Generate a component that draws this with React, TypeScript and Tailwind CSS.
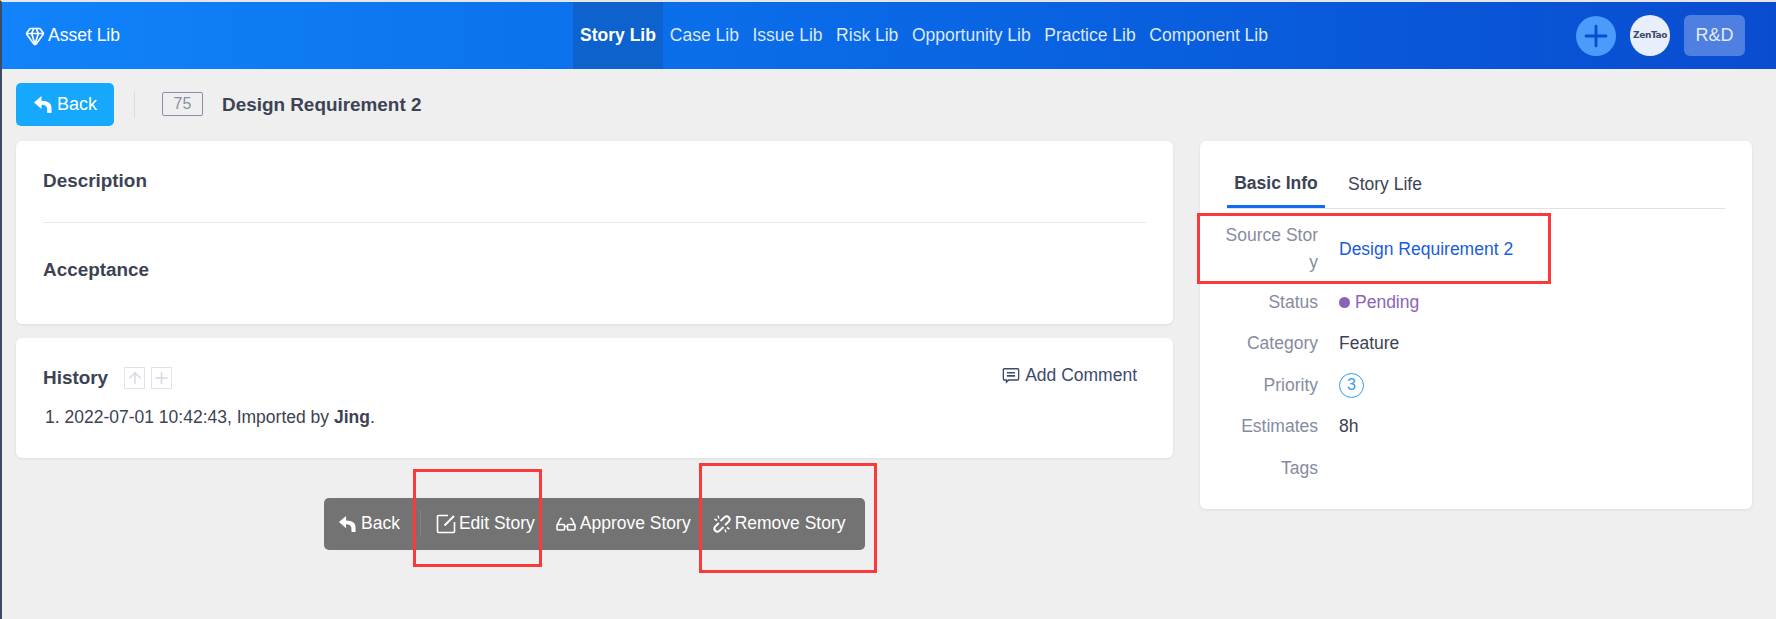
import React from 'react';
import { Gem, Plus, ArrowUp } from 'lucide-react';

type IconProps = { className?: string };

const ReplyIcon: React.FC<IconProps> = ({ className }) => (
    <svg viewBox="0 0 20 20" className={className} fill="currentColor">
        <path d="M8.5 2 1 8.500 8.500 15v-4.200c3 0 5 .7 5.500 3.500l.3 4.700h4.200v-5c0-5-3.500-7-10-7.200z" />
    </svg>
);

const EditIcon: React.FC<IconProps> = ({ className }) => (
    <svg viewBox="0 0 20 20" className={className} fill="none" stroke="currentColor" strokeWidth="1.600">
        <path d="M12 1.500H2.500a1 1 0 0 0-1 1v15a1 1 0 0 0 1 1h15a1 1 0 0 0 1-1V8" />
        <path d="M8.500 11.500 18 2" strokeWidth="2" />
    </svg>
);

const GlassesIcon: React.FC<IconProps> = ({ className }) => (
    <svg viewBox="0 0 20 20" className={className} fill="none" stroke="currentColor" strokeWidth="1.600">
        <rect x="1" y="10.500" width="7.500" height="5.500" rx="1" />
        <rect x="11.500" y="10.500" width="7.500" height="5.500" rx="1" />
        <path d="M8.500 12.500h3M1.200 11 4.500 4.500H6M18.800 11 15.500 4.500H14" />
    </svg>
);

const UnlinkIcon: React.FC<IconProps> = ({ className }) => (
    <svg viewBox="0 0 20 20" className={className} fill="none" stroke="currentColor" strokeWidth="2">
        <path d="M8.500 7 12.800 3a3 3 0 0 1 4.200 4.200l-3.800 3.800" />
        <path d="M11.500 13 7.200 17A3 3 0 0 1 3 12.800L6.800 9" />
        <path d="M2.500 5l2.500 1.500M6 1.800l1 2.700M17.500 15 15 13.500M14 18.200l-1-2.700" strokeWidth="1.500" />
    </svg>
);

const CommentIcon: React.FC<IconProps> = ({ className }) => (
    <svg viewBox="0 0 20 20" className={className} fill="none" stroke="currentColor" strokeWidth="1.500">
        <path d="M2.500 3h15a1 1 0 0 1 1 1v10.500a1 1 0 0 1-1 1H7.500L5 18v-2.500H2.500a1 1 0 0 1-1-1V4a1 1 0 0 1 1-1z" />
        <path d="M5.500 7.500h9M5.500 11h9" strokeWidth="1.800" />
    </svg>
);

const navItems = ['Case Lib', 'Issue Lib', 'Risk Lib', 'Opportunity Lib', 'Practice Lib', 'Component Lib'];

const infoRows = [
    { label: 'Status', h: 'h-[41px]' },
    { label: 'Category', h: 'h-[41px]' },
    { label: 'Priority', h: 'h-[42px]' },
    { label: 'Estimates', h: 'h-[41px]' },
    { label: 'Tags', h: 'h-[42px]' },
];

export default function App() {
    return (
        <div className="relative h-[619px] w-full overflow-hidden border-t-2 border-l-2 border-t-[#e6e6e6] border-l-[#3c4a63] bg-[#efefef] text-[17.5px] text-[#3c4353] font-['Liberation_Sans',sans-serif]">
            {/* Header */}
            <div className="flex h-[67px] items-stretch bg-gradient-to-r from-[#1183fb] to-[#0a4cd0] text-white">
                <div className="flex w-[571px] items-center gap-[3px] pl-[23px] text-[17.5px]">
                    <Gem className="h-[20px] w-[20px]" strokeWidth={2} />
                    <span>Asset Lib</span>
                </div>
                <div className="flex items-stretch text-[17.5px] text-[#dde8fb]">
                    <div className="flex w-[90px] items-center justify-center bg-[#0d62cd] font-bold text-white">Story Lib</div>
                    {navItems.map((item) => (
                        <div key={item} className="flex items-center px-[6.800px]">{item}</div>
                    ))}
                </div>
                <div className="ml-auto flex items-center gap-[14px] pr-[31px]">
                    <div className="flex h-[40px] w-[40px] items-center justify-center rounded-full bg-[#4a9bfc] text-[#0a4cd0]">
                        <Plus className="h-[34px] w-[34px]" strokeWidth={2} />
                    </div>
                    <div className="flex h-[41px] w-[40px] items-center justify-center rounded-full bg-[#e8eefb] text-[9px] font-bold text-[#3c4a6b] font-['DejaVu_Sans',sans-serif] tracking-[-0.4px]">ZenTao</div>
                    <div className="flex h-[41px] w-[61px] items-center justify-center rounded-[6px] bg-[#4f7fe0] text-[18px] text-[#e3ebfb]">R&amp;D</div>
                </div>
            </div>

            {/* Title bar */}
            <div className="flex h-[72px] items-center pb-[2px] pl-[14px]">
                <button className="flex h-[43px] w-[98px] items-center justify-center gap-[4px] rounded-[5px] bg-[#16a8fc] text-[18px] text-white">
                    <ReplyIcon className="h-[20px] w-[20px]" />
                    Back
                </button>
                <div className="ml-[20px] h-[27px] w-px bg-[#dcdcdc]" />
                <span className="ml-[27px] flex h-[24px] w-[41px] items-center justify-center rounded-[2px] border border-[#8a90a3] text-[16px] text-[#8a90a3]">75</span>
                <span className="ml-[19px] mt-[2px] text-[18.900px] font-bold">Design Requirement 2</span>
            </div>

            {/* Content */}
            <div className="flex items-start pl-[14px]">
                <div className="w-[1157px]">
                    <div className="h-[183px] rounded-[6px] bg-white px-[27px] shadow-[0_1px_3px_rgba(0,0,0,0.08)]">
                        <div className="flex h-[82px] items-center border-b border-[#e8e8e8] text-[18.900px] font-bold">Description</div>
                        <div className="flex h-[95px] items-center text-[18.900px] font-bold">Acceptance</div>
                    </div>
                    <div className="mt-[14px] h-[120px] rounded-[6px] bg-white px-[27px] pt-[29px] shadow-[0_1px_3px_rgba(0,0,0,0.08)]">
                        <div className="flex h-[22px] items-center">
                            <span className="text-[18.900px] font-bold">History</span>
                            <span className="ml-[16px] flex h-[22px] w-[21px] items-center justify-center border border-[#dfe2ea] text-[#d5d9e4]">
                                <ArrowUp className="h-[18px] w-[18px]" strokeWidth={2} />
                            </span>
                            <span className="ml-[6px] flex h-[22px] w-[21px] items-center justify-center border border-[#dfe2ea] text-[#d5d9e4]">
                                <Plus className="h-[20px] w-[20px]" strokeWidth={2} />
                            </span>
                            <span className="ml-auto flex -translate-y-[3px] items-center gap-[5px] pr-[9px] text-[#3c4a6b]">
                                <CommentIcon className="h-[18px] w-[18px]" />
                                Add Comment
                            </span>
                        </div>
                        <div className="mt-[15px] pl-[2px]">1. 2022-07-01 10:42:43, Imported by <b>Jing</b>.</div>
                    </div>
                    {/* Action bar */}
                    <div className="mt-[40px] ml-[308px] flex h-[52px] w-[541px] items-center rounded-[5px] bg-[#737373] pb-[1px] pl-[14px] text-[17.5px] text-white">
                        <span className="flex items-center gap-[4px]">
                            <ReplyIcon className="h-[19px] w-[19px]" />
                            Back
                        </span>
                        <span className="ml-[20px] h-[27px] w-px bg-[#858585]" />
                        <span className="ml-[15px] flex items-center gap-[3px]">
                            <EditIcon className="h-[20px] w-[20px]" />
                            Edit Story
                        </span>
                        <span className="ml-[21px] flex items-center gap-[4px]">
                            <GlassesIcon className="h-[20px] w-[20px]" />
                            Approve Story
                        </span>
                        <span className="ml-[21px] flex items-center gap-[3px]">
                            <UnlinkIcon className="h-[20px] w-[20px]" />
                            Remove Story
                        </span>
                    </div>
                </div>

                {/* Side panel */}
                <div className="ml-[27px] h-[368px] w-[552px] rounded-[6px] bg-white px-[27px] shadow-[0_1px_3px_rgba(0,0,0,0.08)]">
                    <div className="flex h-[68px] items-end border-b border-[#e2e2e2]">
                        <div className="flex h-[46px] w-[98px] items-center justify-center border-b-[3px] border-[#0f6bf0] font-bold">Basic Info</div>
                        <div className="ml-[23px] flex h-[48px] items-center">Story Life</div>
                    </div>
                    <div className="mt-[7px] flex h-[66px] items-center">
                        <div className="w-[91px] text-right leading-[27px] text-[#858ca0]">
                            <span className="-ml-[8px] block w-[99px]">Source Stor</span>
                            <span className="block">y</span>
                        </div>
                        <div className="ml-[21px] mt-[1px] text-[#1a5ce0]">Design Requirement 2</div>
                    </div>
                    {infoRows.map((row) => (
                        <div key={row.label} className={`flex items-center ${row.h}`}>
                            <div className="w-[91px] text-right text-[#858ca0]">{row.label}</div>
                            <div className="ml-[21px]">
                                {row.label === 'Status' && (
                                    <span className="flex items-center gap-[5px] text-[#8a63b8]">
                                        <span className="h-[11px] w-[11px] rounded-full bg-[#8a63b8]" />
                                        Pending
                                    </span>
                                )}
                                {row.label === 'Category' && 'Feature'}
                                {row.label === 'Priority' && (
                                    <span className="flex h-[25px] w-[25px] items-center justify-center rounded-full border border-[#2f9cf0] text-[16px] text-[#2f9cf0]">3</span>
                                )}
                                {row.label === 'Estimates' && '8h'}
                            </div>
                        </div>
                    ))}
                </div>
            </div>

            {/* Red annotation boxes */}
            <div className="absolute left-[411px] top-[467px] h-[98px] w-[129px] border-[3px] border-[#f93a3a]" />
            <div className="absolute left-[697px] top-[461px] h-[110px] w-[178px] border-[3px] border-[#f93a3a]" />
            <div className="absolute left-[1195px] top-[211px] h-[71px] w-[354px] border-[3px] border-[#f93a3a]" />
        </div>
    );
}
